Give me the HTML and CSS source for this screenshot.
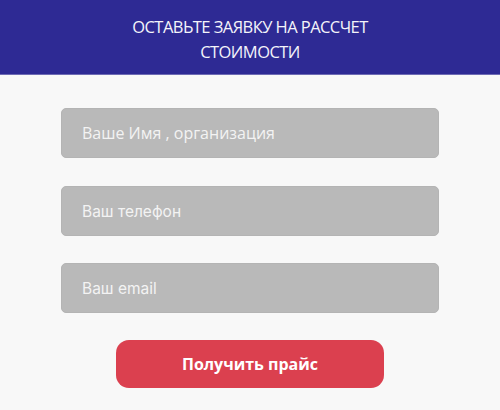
FILE: index.html
```
<!DOCTYPE html>
<html lang="ru">
<head>
<meta charset="utf-8">
<link rel="stylesheet" href="styles.css">
</head>
<body>
<header class="head">
  <h1 class="title">ОСТАВЬТЕ ЗАЯВКУ НА РАССЧЕТ<br>СТОИМОСТИ</h1>
</header>
<form class="form">
  <input class="field" type="text" placeholder="Ваше Имя , организация">
  <input class="field field-alt" type="tel" placeholder="Ваш телефон">
  <input class="field field-alt" type="email" placeholder="Ваш email">
  <button class="btn" type="button">Получить прайс</button>
</form>
</body>
</html>
```
FILE: styles.css
```
* { box-sizing: border-box; }
html, body { margin: 0; padding: 0; }
body {
  background: #f8f8f8;
  font-family: "Open Sans", "Noto Sans", sans-serif;
  width: 500px;
  height: 410px;
  overflow: hidden;
}
.head {
  background: #2e2a94;
  height: 75px;
  display: flex;
  align-items: center;
  justify-content: center;
  border-bottom: 1px solid #6e6bb4;
}
.title {
  margin: 0;
  color: #f4f4fa;
  font-weight: 400;
  font-size: 16.5px;
  letter-spacing: -0.55px;
  line-height: 25px;
  text-align: center;
  padding-top: 3px;
}
.form {
  display: flex;
  flex-direction: column;
  align-items: center;
  padding-top: 33px;
}
.field {
  width: 378px;
  height: 50px;
  border: 1px solid #b4b4b4;
  border-radius: 5px;
  background: #b9b9b9;
  padding: 0 20px;
  font-family: "Open Sans", sans-serif;
  font-size: 16px;
  color: #f3f3f3;
  margin-bottom: 28px;
  outline: none;
}
.field:nth-child(2) { margin-bottom: 27px; }
.field:nth-child(3) { margin-bottom: 27px; }
.field::placeholder { color: #f3f3f3; opacity: 1; }
.field-alt { font-family: "Inter", "Open Sans", sans-serif; font-size: 15.5px; }
.btn {
  width: 268px;
  height: 48px;
  border: none;
  border-radius: 13px;
  background: #db404f;
  color: #ffffff;
  font-family: "Open Sans", sans-serif;
  font-weight: 700;
  font-size: 16px;
}
```
